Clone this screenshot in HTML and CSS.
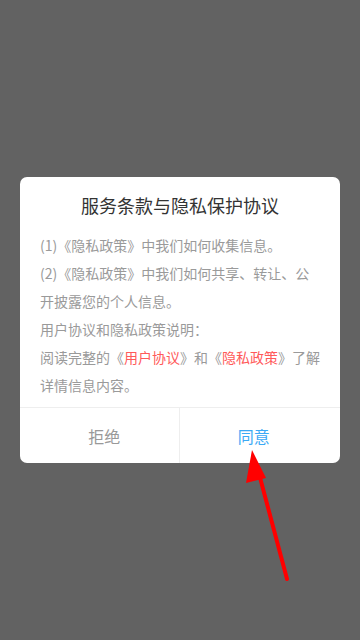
FILE: index.html
```html
<!DOCTYPE html>
<html lang="zh">
<head>
<meta charset="utf-8">
<link rel="stylesheet" href="styles.css">
</head>
<body>
<div class="screen">
  <div class="dialog">
    <div class="title">服务条款与隐私保护协议</div>
    <div class="body">
      <p>(1)《隐私政策》中我们如何收集信息。</p>
      <p>(2)《隐私政策》中我们如何共享、转让、公<br>开披露您的个人信息。</p>
      <p>用户协议和隐私政策说明：</p>
      <p>阅读完整的《<span class="link">用户协议</span>》和《<span class="link">隐私政策</span>》了解<br>详情信息内容。</p>
    </div>
    <div class="actions">
      <div class="btn refuse">拒绝</div>
      <div class="btn agree">同意</div>
    </div>
  </div>
  <svg class="arrow" width="360" height="640" viewBox="0 0 360 640">
    <line x1="287" y1="579" x2="258" y2="470" stroke="#ff0000" stroke-width="4" stroke-linecap="round"/>
    <polygon points="252,450 246,483 266,478" fill="#ff0000"/>
  </svg>
</div>
</body>
</html>
```
FILE: styles.css
```css
html, body {
  margin: 0;
  padding: 0;
}
body {
  font-family: "Noto Sans CJK SC", "Noto Sans", sans-serif;
  background: #626262;
}
.screen {
  position: relative;
  width: 360px;
  height: 640px;
  display: flex;
  align-items: center;
  justify-content: center;
}
.dialog {
  width: 320px;
  height: 286px;
  background: #ffffff;
  border-radius: 7px;
  display: flex;
  flex-direction: column;
  overflow: hidden;
}
.title {
  margin-top: 14px;
  height: 28px;
  line-height: 28px;
  font-size: 18px;
  color: #333333;
  text-align: center;
}
.body {
  margin-top: 12px;
  padding: 0 20px;
  font-size: 14px;
  line-height: 28px;
  color: #9a9a9a;
  flex: 1;
  white-space: nowrap;
}
.body p {
  margin: 0;
}
.link {
  color: #ff5a5a;
}
.actions {
  height: 55px;
  border-top: 1px solid #eeeeee;
  display: flex;
}
.btn {
  flex: 1;
  display: flex;
  align-items: center;
  justify-content: center;
  font-size: 16px;
}
.refuse {
  color: #999999;
  padding-left: 10px;
  border-right: 1px solid #eeeeee;
}
.agree {
  color: #3ba9f5;
  padding-right: 12px;
}
.arrow {
  position: absolute;
  left: 0;
  top: 0;
}
```
